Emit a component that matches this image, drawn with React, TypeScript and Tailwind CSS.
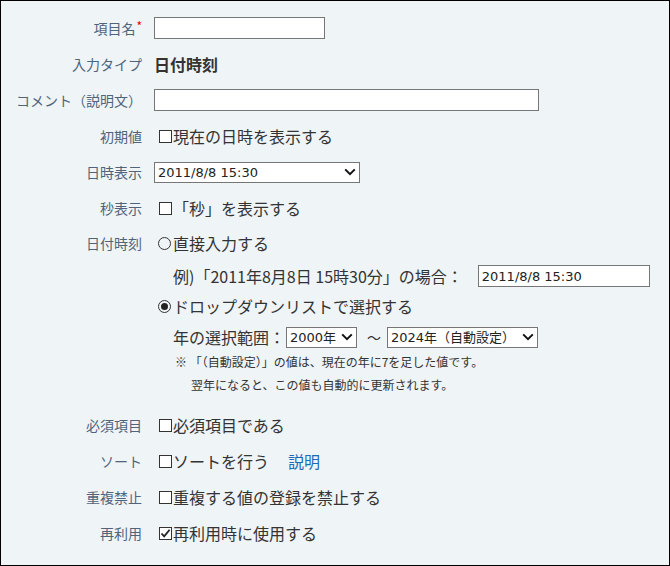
import React from "react";

const jp = "font-['Noto_Sans_CJK_JP','Noto_Sans',sans-serif]";
const mono = "font-['DejaVu_Sans','Noto_Sans_CJK_JP',sans-serif]";

function Label({ children }: { children: React.ReactNode }) {
  return <div className="w-[141px] shrink-0 text-right text-[14px] text-[#4f647b]">{children}</div>;
}

function Box({ checked }: { checked?: boolean }) {
  return (
    <span className="inline-flex items-center justify-center w-[13px] h-[13px] border border-[#333] bg-white ml-[5px] mr-[1px] shrink-0">
      {checked && (
        <svg width="11" height="11" viewBox="0 0 11 11">
          <path d="M1.5 5.5 L4.2 8.4 L9.6 1.8" fill="none" stroke="#222" strokeWidth="1.8" />
        </svg>
      )}
    </span>
  );
}

function Radio({ checked }: { checked?: boolean }) {
  return (
    <span className="inline-flex items-center justify-center w-[13px] h-[13px] rounded-full border border-[#333] ml-[4px] mr-[2px] shrink-0">
      {checked && <span className="w-[7px] h-[7px] rounded-full bg-[#222]" />}
    </span>
  );
}

function Chevron() {
  return (
    <svg width="12" height="8" viewBox="0 0 12 8" className="shrink-0">
      <path d="M1.2 1.4 L6 6.2 L10.8 1.4" fill="none" stroke="#111" strokeWidth="2" />
    </svg>
  );
}

function Select({ value, width }: { value: string; width: string }) {
  return (
    <div className={`${width} h-[21px] border border-[#767676] bg-white flex items-center justify-between pl-[3px] pr-[3px]`}>
      <span className={`${mono} text-[13px] text-[#222] leading-none`}>{value}</span>
      <Chevron />
    </div>
  );
}

function Row({ label, children, className = "h-9" }: { label: React.ReactNode; children: React.ReactNode; className?: string }) {
  return (
    <div className={`flex items-center gap-[12px] ${className}`}>
      <Label>{label}</Label>
      <div className="flex items-center text-[16px] text-[#333]">{children}</div>
    </div>
  );
}

export default function App() {
  return (
    <div className={`${jp} w-[670px] h-[566px] border border-black bg-[#eff4f7] pt-[9px] box-border`}>
      <Row label={<span>項目名<span className="text-[#e00] text-[12px] align-[3px] ml-[1px]">*</span></span>}>
        <div className="w-[171px] h-[22px] border border-[#767676] bg-white" />
      </Row>
      <Row label="入力タイプ">
        <span className="font-bold text-[16px] text-[#333]">日付時刻</span>
      </Row>
      <Row label="コメント（説明文）">
        <div className="w-[385px] h-[22px] border border-[#767676] bg-white" />
      </Row>
      <Row label="初期値">
        <Box />
        <span>現在の日時を表示する</span>
      </Row>
      <Row label="日時表示">
        <Select value="2011/8/8 15:30" width="w-[206px]" />
      </Row>
      <Row label="秒表示">
        <Box />
        <span>「秒」を表示する</span>
      </Row>

      <div className="flex gap-[12px] pb-[14px]">
        <Label>
          <div className="h-[34px] flex items-center justify-end">日付時刻</div>
        </Label>
        <div className="flex flex-col text-[16px] text-[#333]">
          <div className="h-[34px] flex items-center">
            <Radio />
            <span>直接入力する</span>
          </div>
          <div className="h-[32px] flex items-center pl-[19px]">
            <span>例)「2011年8月8日 15時30分」の場合：</span>
            <div className="ml-[15px] w-[172px] h-[22px] border border-[#767676] bg-white flex items-center pl-[3px]">
              <span className={`${mono} text-[13px] text-[#222] leading-none`}>2011/8/8 15:30</span>
            </div>
          </div>
          <div className="h-[28px] flex items-center">
            <Radio checked />
            <span>ドロップダウンリストで選択する</span>
          </div>
          <div className="h-[34px] flex items-center pl-[19px]">
            <span>年の選択範囲：</span>
            <div className="ml-[1px]">
              <Select value="2000年" width="w-[71px]" />
            </div>
            <span className="ml-[10px] mr-[6px] text-[14px]">～</span>
            <Select value="2024年（自動設定）" width="w-[151px]" />
          </div>
          <div className="h-[16px] flex items-center pl-[21px] text-[12px] text-[#333]">
            ※ 「（自動設定）」の値は、現在の年に7を足した値です。
          </div>
          <div className="h-[16px] mt-[7px] flex items-center pl-[37px] text-[12px] text-[#333]">
            翌年になると、この値も自動的に更新されます。
          </div>
        </div>
      </div>

      <Row label="必須項目">
        <Box />
        <span>必須項目である</span>
      </Row>
      <Row label="ソート">
        <Box />
        <span>ソートを行う</span>
        <span className="ml-[19px] text-[#1a6cb5]">説明</span>
      </Row>
      <Row label="重複禁止">
        <Box />
        <span>重複する値の登録を禁止する</span>
      </Row>
      <Row label="再利用">
        <Box checked />
        <span>再利用時に使用する</span>
      </Row>
    </div>
  );
}
